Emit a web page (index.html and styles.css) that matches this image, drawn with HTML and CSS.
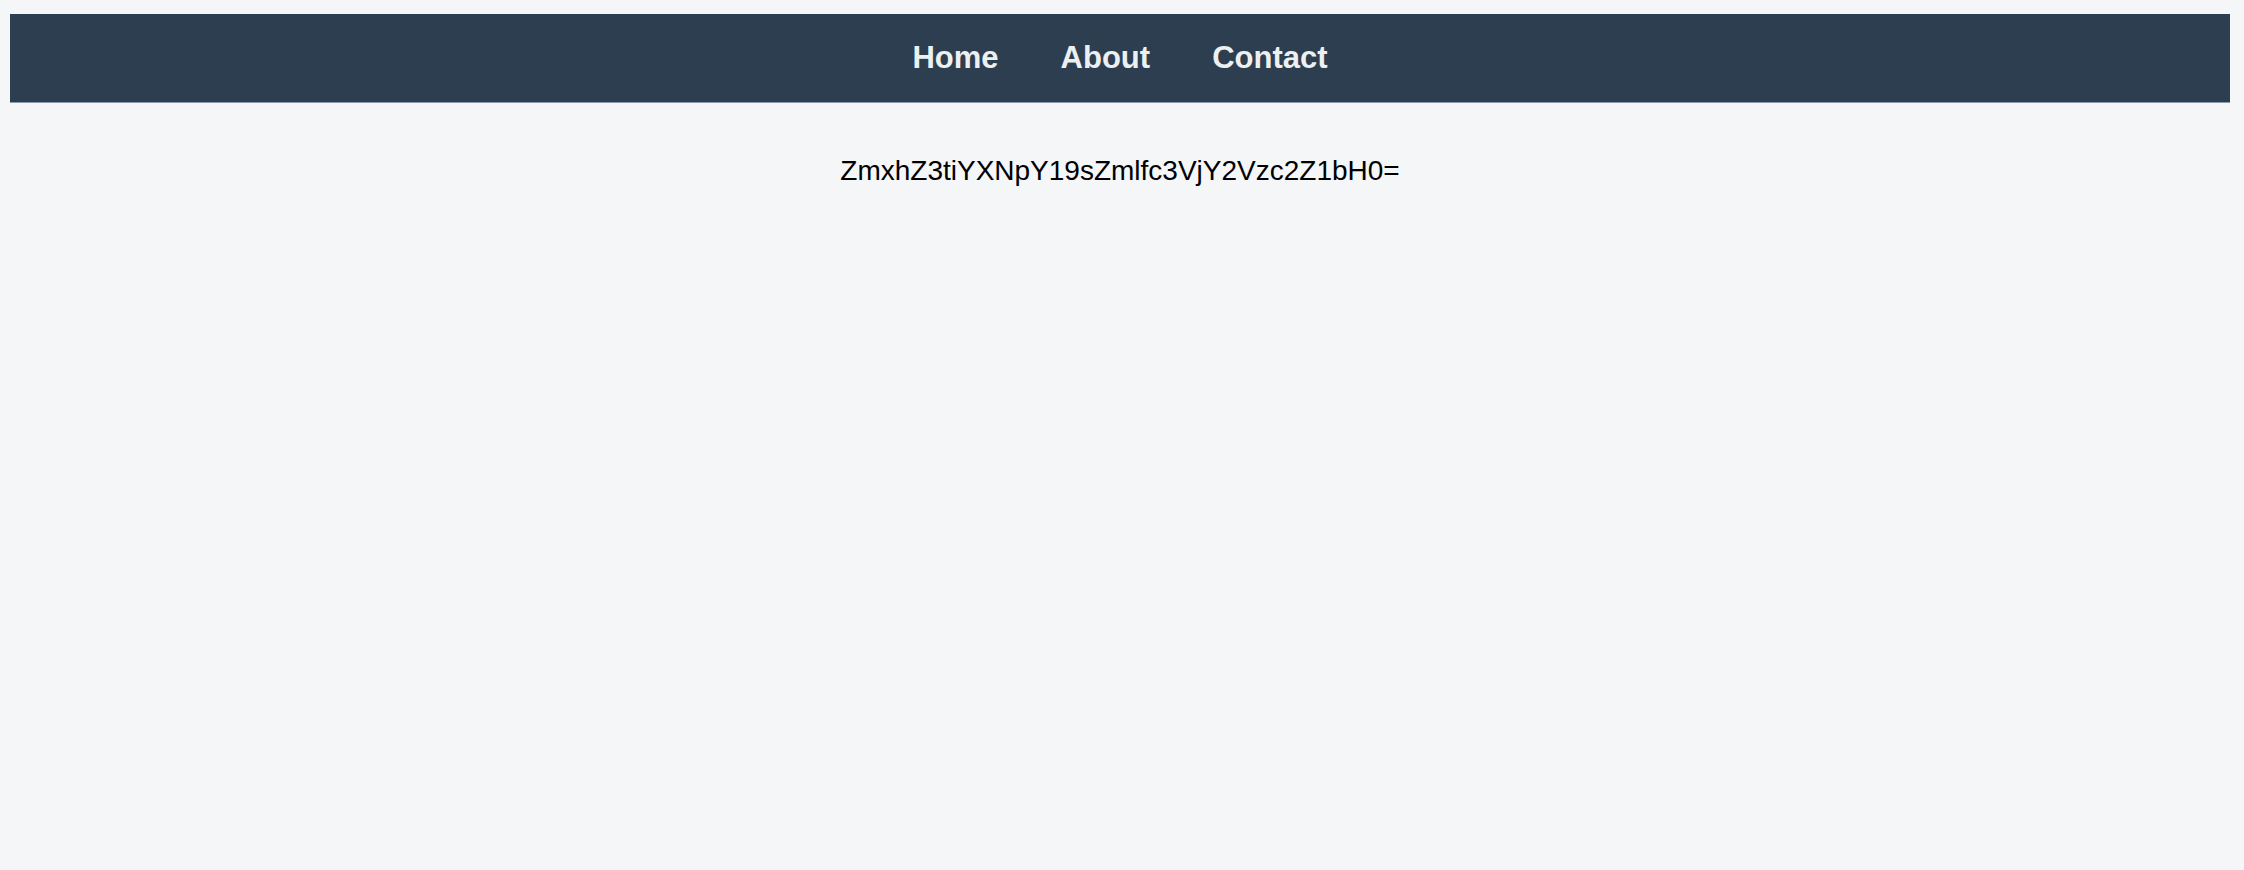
FILE: index.html
```html
<!DOCTYPE html>
<html lang="en">
<head>
<meta charset="utf-8">
<title>Home</title>
<link rel="stylesheet" href="styles.css">
</head>
<body>
<div class="page">
  <nav class="nav">
    <a class="nav-link" href="#">Home</a>
    <a class="nav-link" href="#">About</a>
    <a class="nav-link" href="#">Contact</a>
  </nav>
  <main class="content">
    <p class="message">ZmxhZ3tiYXNpY19sZmlfc3VjY2Vzc2Z1bH0=</p>
  </main>
</div>
</body>
</html>
```

FILE: styles.css
```css
html, body {
  margin: 0;
  padding: 0;
  background: #f4f6f8;
  font-family: "Liberation Sans", Arial, sans-serif;
}
.page {
  padding: 14px 14px 0 10px;
  min-height: 870px;
  box-sizing: border-box;
}
.nav {
  background: #2c3e50;
  height: 89px;
  display: flex;
  justify-content: center;
  align-items: center;
  gap: 62px;
  border-bottom: 1px solid #8a9aaa;
  box-sizing: border-box;
}
.nav-link {
  color: #ecf0f1;
  text-decoration: none;
  font-weight: bold;
  font-size: 31px;
}
.content {
  text-align: center;
}
.message {
  margin: 0;
  padding-top: 52px;
  font-size: 28px;
  color: #000;
}
```
